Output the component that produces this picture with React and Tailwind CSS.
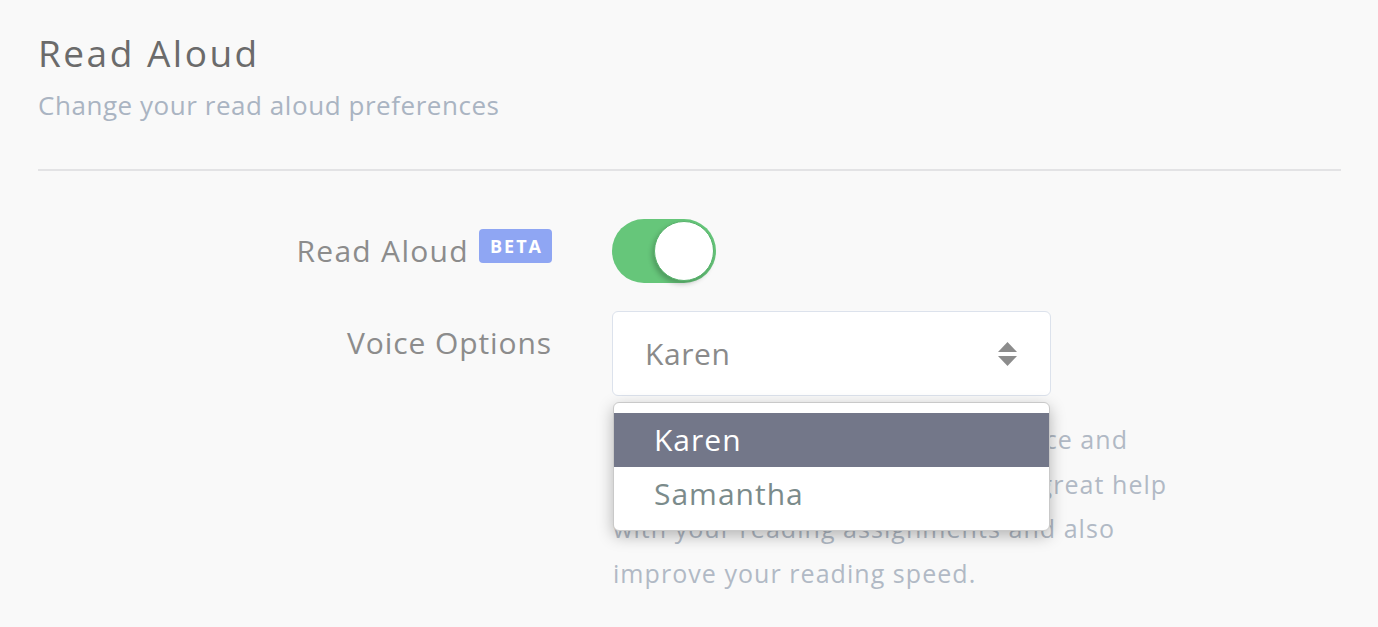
import React from 'react';

const Toggle = ({ on }) => (
  <div className={`w-[104px] h-[64px] rounded-full flex items-center px-[2px] ${on ? 'bg-[#66c67a] justify-end' : 'bg-[#d6d6d6] justify-start'}`}>
    <div className="w-[60px] h-[60px] rounded-full bg-white border border-[#58b36c] shadow-[-2px_3px_5px_rgba(0,0,0,0.22)]" />
  </div>
);

const SortArrows = () => (
  <svg width="19" height="24" viewBox="0 0 19 24" className="text-[#8c8c8c]">
    <path d="M9.5 0 L19 10 L0 10 Z" fill="currentColor" />
    <path d="M0 14 L19 14 L9.5 24 Z" fill="currentColor" />
  </svg>
);

const voices = ['Karen', 'Samantha'];

const App = () => {
  const selected = 'Karen';

  return (
    <div className="min-h-screen bg-[#f9f9f9] pl-[38px] pr-[37px] pt-[31px] font-['Open_Sans',sans-serif]">
      <h1 className="text-[37px] leading-[44px] text-[#6b6b6b] tracking-[2.5px]">Read Aloud</h1>
      <p className="mt-[12px] text-[26px] leading-[36px] text-[#aab4c2] tracking-[0.55px]">Change your read aloud preferences</p>

      <div className="mt-[46px] h-[2px] bg-[#e3e3e5]" />

      <div className="mt-[48px] flex flex-col gap-[28px]">
        <div className="flex items-center">
          <div className="w-[514px] flex items-center justify-end">
            <span className="text-[30px] leading-[36px] text-[#8c8c8c] tracking-[1.3px]">Read Aloud</span>
            <span className="ml-[10px] mb-[10px] h-[34px] pl-[11px] pr-[9px] rounded-[4px] bg-[#8fa6f3] text-white font-bold text-[18px] leading-[34px] tracking-[2px]">BETA</span>
          </div>
          <div className="ml-[60px]">
            <Toggle on />
          </div>
        </div>

        <div className="flex items-start">
          <div className="w-[514px] flex justify-end pt-[14px]">
            <span className="text-[30px] leading-[36px] text-[#8c8c8c] tracking-[0.9px]">Voice Options</span>
          </div>
          <div className="ml-[60px]">
            <div className="relative w-[439px]">
              <div className="h-[85px] rounded-[6px] border border-[#dce2ec] bg-white flex items-center justify-between pl-[32px] pr-[33px]">
                <span className="text-[30px] text-[#8a8a8a] tracking-[0.6px]">{selected}</span>
                <SortArrows />
              </div>

              <div className="absolute left-[1px] top-[91px] w-[437px] rounded-[6px] border border-[#c9c9c9] bg-white py-[10px] shadow-[0_5px_16px_rgba(0,0,0,0.28)] z-10">
                {voices.map((v) => (
                  <div
                    key={v}
                    className={`h-[53.5px] flex items-center pl-[40px] text-[30px] tracking-[1px] ${v === selected ? 'bg-[#737789] text-white' : 'text-[#7b8b8b]'}`}
                  >
                    {v}
                  </div>
                ))}
              </div>

              <div className="mt-[21px] pl-[1px] text-[25px] leading-[44.5px] text-[#b1b9c5] tracking-[1.05px] whitespace-nowrap">
                <div>Hear any text read at your own pace and</div>
                <div>follow along word by word. It is a great help</div>
                <div>with your reading assignments and also</div>
                <div>improve your reading speed.</div>
              </div>
            </div>
          </div>
        </div>
      </div>
    </div>
  );
};

export default App;
